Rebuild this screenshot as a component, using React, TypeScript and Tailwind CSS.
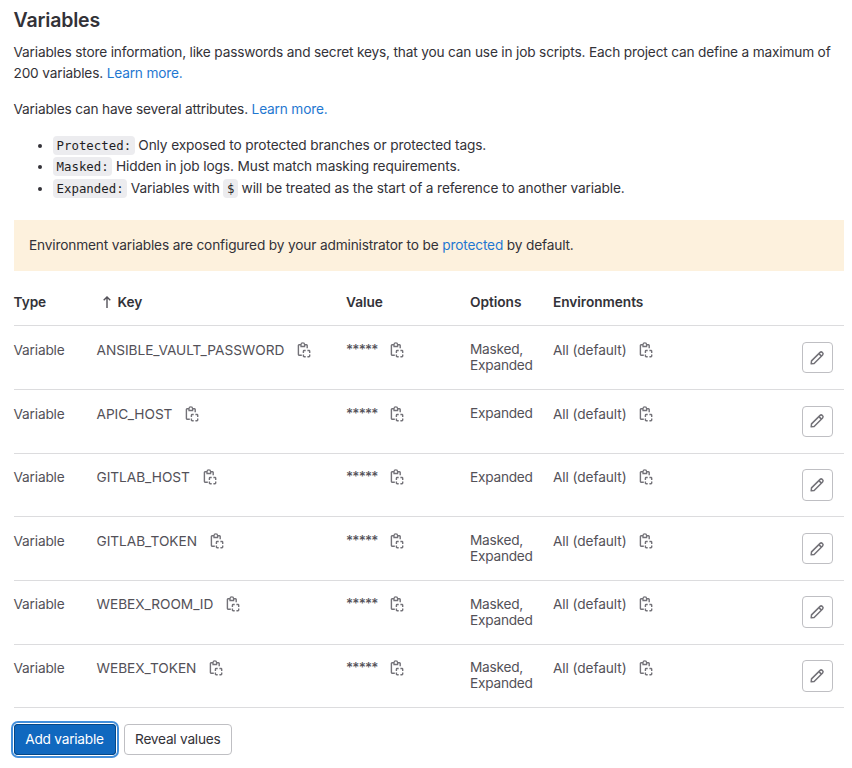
import React from "react";

type Row = { name: string; options: string[] };

const rows: Row[] = [
  { name: "ANSIBLE_VAULT_PASSWORD", options: ["Masked,", "Expanded"] },
  { name: "APIC_HOST", options: ["Expanded"] },
  { name: "GITLAB_HOST", options: ["Expanded"] },
  { name: "GITLAB_TOKEN", options: ["Masked,", "Expanded"] },
  { name: "WEBEX_ROOM_ID", options: ["Masked,", "Expanded"] },
  { name: "WEBEX_TOKEN", options: ["Masked,", "Expanded"] },
];

const columns = "grid grid-cols-[83px_249.5px_124px_83px_1fr_auto]";

function CopyIcon() {
  return (
    <svg viewBox="0 0 16 16" className="h-4 w-4 shrink-0 text-[#737278]" fill="none" stroke="currentColor" strokeWidth="1.4">
      <path d="M5 2.8H3a.6.6 0 0 0-.6.6v9.2a.6.6 0 0 0 .6.6h2.8M9 2.8h1.6a.6.6 0 0 1 .6.6v2.8" />
      <path d="M5 4.5V2.7a1.8 1.8 0 0 1 3.6 0v1.8z" strokeWidth="1.3" />
      <path d="M7.4 10.9V9.2a.7.7 0 0 1 .7-.7h1.6M11.4 8.5H13a.7.7 0 0 1 .7.7v1.7M13.7 12.4v1.7a.7.7 0 0 1-.7.7h-1.6M9.7 14.8H8.1a.7.7 0 0 1-.7-.7v-1.7" />
    </svg>
  );
}

function PencilIcon() {
  return (
    <svg viewBox="0 0 16 16" className="h-4 w-4 text-[#737278]" fill="none" stroke="currentColor" strokeWidth="1.5" strokeLinejoin="round">
      <path d="M2.2 13.8l.3-2.9 8.6-8.5a1.5 1.5 0 0 1 2.1 0l.4.4a1.5 1.5 0 0 1 0 2.1l-8.5 8.6zM9.9 3.6l2.5 2.5" />
    </svg>
  );
}

function Code({ children }: { children: React.ReactNode }) {
  return (
    <code className="rounded-[4px] bg-[#ececef] px-[3.5px] py-[2px] font-['DejaVu_Sans_Mono',monospace] text-[12.4px] leading-none tracking-normal text-[#1f1e24]">
      {children}
    </code>
  );
}

function Link({ children }: { children: React.ReactNode }) {
  return <a className="text-[#1f78d1]">{children}</a>;
}

export default function App() {
  return (
    <div className="h-[768px] w-[852px] overflow-hidden bg-white pr-2 pl-[13.5px] font-['Inter','Liberation_Sans',sans-serif] text-[13.7px] tracking-[-0.18px] text-[#333238]">
      <h4 className="pt-[8px] text-[19.5px] leading-6 font-semibold tracking-[-0.17px]">Variables</h4>
      <p className="mt-[10px] leading-[20.5px]">
        Variables store information, like passwords and secret keys, that you can use in job scripts. Each project can define a maximum of
        200 variables. <Link>Learn more.</Link>
      </p>
      <p className="mt-[16px] leading-[20.5px] tracking-[-0.18px]">
        Variables can have several attributes. <Link>Learn more.</Link>
      </p>
      <ul className="mt-[15.3px] list-disc pl-[39.5px] leading-[21.5px] tracking-[-0.13px]">
        <li className="h-[21.5px]"><Code>Protected:</Code> Only exposed to protected branches or protected tags.</li>
        <li className="h-[21.5px]"><Code>Masked:</Code> Hidden in job logs. Must match masking requirements.</li>
        <li className="h-[21.5px]"><Code>Expanded:</Code> Variables with <Code>$</Code> will be treated as the start of a reference to another variable.</li>
      </ul>
      <div className="mt-[20.4px] flex h-[51px] items-center bg-[#fdf1dd] px-[15.5px] tracking-[-0.16px]">
        <span>Environment variables are configured by your administrator to be <Link>protected</Link> by default.</span>
      </div>

      <div className={`${columns} mt-[23px] h-[32.7px] border-b border-[#dcdcde] leading-4 font-semibold tracking-[-0.05px]`}>
        <span>Type</span>
        <span className="flex items-center self-start pl-[5px]">
          <svg viewBox="0 0 10 14" className="mr-[6px] h-[14px] w-[10px]" fill="none" stroke="#535158" strokeWidth="1.4">
            <path d="M5 13V2M1.7 5.2L5 1.9l3.3 3.3" />
          </svg>
          Key
        </span>
        <span>Value</span>
        <span>Options</span>
        <span>Environments</span>
        <span />
      </div>

      {rows.map((row) => (
        <div key={row.name} className={`${columns} h-[63.65px] border-b border-[#dcdcde] pt-[15.5px] leading-4 text-[#535158]`}>
          <span>Variable</span>
          <span className="flex items-center gap-3 self-start tracking-[-0.04px]">{row.name}<CopyIcon /></span>
          <span className="flex items-center gap-[11px] self-start">
            <span className="-mt-[2px] font-medium tracking-[-0.8px]">*****</span>
            <CopyIcon />
          </span>
          <span className="pt-[0.4px] leading-[15.8px] tracking-[-0.25px]">
            {row.options.map((option) => <span key={option} className="block">{option}</span>)}
          </span>
          <span className="flex items-center gap-[11.5px] self-start tracking-[-0.09px]">All (default)<CopyIcon /></span>
          <button className="mr-[11px] flex h-[31.5px] w-[31.5px] items-center justify-center rounded-[4px] border border-[#bfbfc3] bg-white">
            <PencilIcon />
          </button>
        </div>
      ))}

      <div className="mt-[15.5px] flex gap-2 tracking-[-0.25px]">
        <button className="h-[31.5px] w-[102px] rounded-[4px] bg-[#1068bf] text-white shadow-[inset_0_0_0_1px_#064787,0_0_0_1px_#fff,0_0_0_3px_#428fdc]">Add variable</button>
        <button className="h-[31.5px] w-[108.5px] rounded-[4px] border border-[#bfbfc3] bg-white">Reveal values</button>
      </div>
    </div>
  );
}
